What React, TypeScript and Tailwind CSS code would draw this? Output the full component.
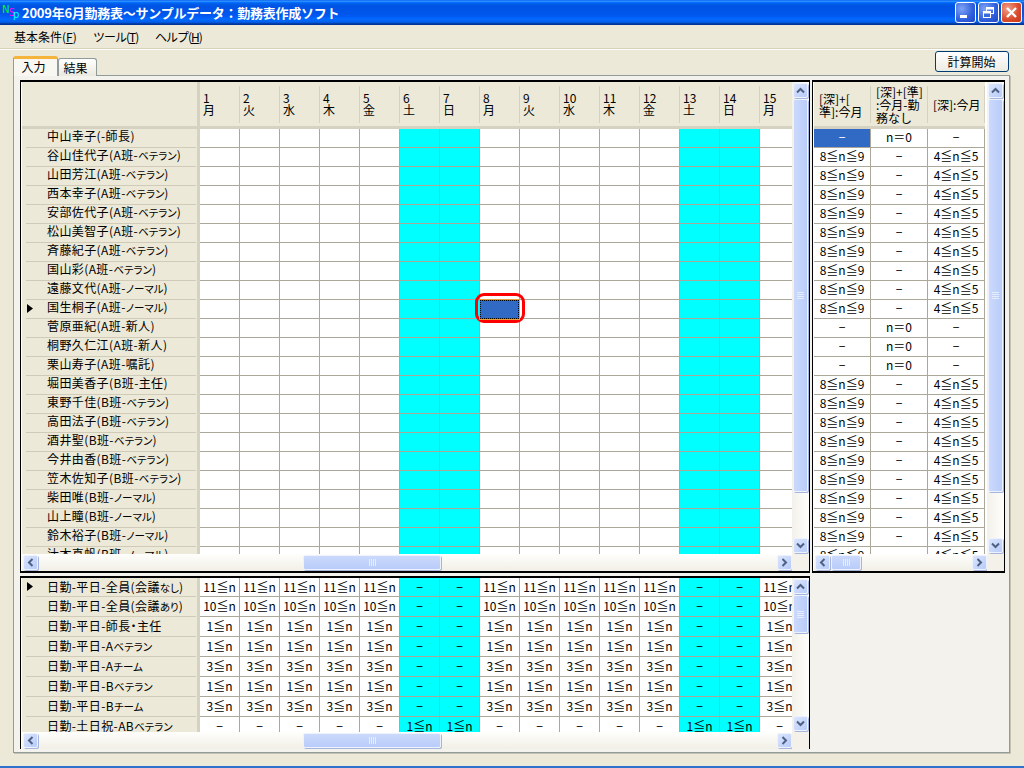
const FONT = "font-['Noto_Sans_CJK_JP','DejaVu_Sans',sans-serif]";

const staff = [
    '中山幸子(-師長)',
    '谷山佳代子(A班-ベテラン)',
    '山田芳江(A班-ベテラン)',
    '西本幸子(A班-ベテラン)',
    '安部佐代子(A班-ベテラン)',
    '松山美智子(A班-ベテラン)',
    '斉藤紀子(A班-ベテラン)',
    '国山彩(A班-ベテラン)',
    '遠藤文代(A班-ノーマル)',
    '国生桐子(A班-ノーマル)',
    '菅原亜紀(A班-新人)',
    '桐野久仁江(A班-新人)',
    '栗山寿子(A班-嘱託)',
    '堀田美香子(B班-主任)',
    '東野千佳(B班-ベテラン)',
    '高田法子(B班-ベテラン)',
    '酒井聖(B班-ベテラン)',
    '今井由香(B班-ベテラン)',
    '笠木佐知子(B班-ベテラン)',
    '柴田唯(B班-ノーマル)',
    '山上瞳(B班-ノーマル)',
    '鈴木裕子(B班-ノーマル)',
    '辻本真帆(B班-ノーマル)',
];

const days = ['月', '火', '水', '木', '金', '土', '日', '月', '火', '水', '木', '金', '土', '日', '月'];
const isWeekend = (i: number) => days[i] === '土' || days[i] === '日';

const rules: { name: string; weekday: string; weekend: string }[] = [
    { name: '日勤-平日-全員(会議なし)', weekday: '11≦n', weekend: '−' },
    { name: '日勤-平日-全員(会議あり)', weekday: '10≦n', weekend: '−' },
    { name: '日勤-平日-師長・主任', weekday: '1≦n', weekend: '−' },
    { name: '日勤-平日-Aベテラン', weekday: '1≦n', weekend: '−' },
    { name: '日勤-平日-Aチーム', weekday: '3≦n', weekend: '−' },
    { name: '日勤-平日-Bベテラン', weekday: '1≦n', weekend: '−' },
    { name: '日勤-平日-Bチーム', weekday: '3≦n', weekend: '−' },
    { name: '日勤-土日祝-ABベテラン', weekday: '−', weekend: '1≦n' },
];

const summaryRow = (i: number) =>
    i === 0 || (i >= 10 && i <= 12) ? ['−', 'n＝0', '−'] : ['8≦n≦9', '−', '4≦n≦5'];

function Chevron({ dir }: { dir: 'up' | 'down' | 'left' | 'right' }) {
    const points = {
        up: '1,6.5 4.5,3 8,6.5',
        down: '1,2.5 4.5,6 8,2.5',
        left: '6.5,1 3,4.5 6.5,8',
        right: '2.5,1 6,4.5 2.5,8',
    }[dir];
    return (
        <svg width="9" height="9" viewBox="0 0 9 9">
            <polyline points={points} fill="none" stroke="#4d6185" strokeWidth="2" />
        </svg>
    );
}

function ScrollButton({ dir }: { dir: 'up' | 'down' | 'left' | 'right' }) {
    return (
        <div className="flex h-[15px] w-[15px] shrink-0 items-center justify-center rounded-[2px] border border-[#eef2fd] bg-[linear-gradient(135deg,#dbe5fd,#b8cbf8)] shadow-[1px_1px_0_#a5b5dc]">
            <Chevron dir={dir} />
        </div>
    );
}

function VScroll({ thumbHeight }: { thumbHeight: number }) {
    return (
        <div className="flex w-[17px] shrink-0 flex-col items-center bg-[linear-gradient(90deg,#f3f1ea,#fefefc)] pt-[1px]">
            <ScrollButton dir="up" />
            <div
                className="mt-[1px] flex w-[15px] shrink-0 flex-col items-center justify-center gap-[1px] rounded-[2px] border border-[#eef2fd] bg-[linear-gradient(90deg,#cbd9fc,#b9ccf9)] shadow-[1px_1px_0_#a5b5dc]"
                style={{ height: thumbHeight }}
            >
                {[0, 1, 2, 3].map((n) => (
                    <div key={n} className="h-[1px] w-[7px] bg-[#e6edfe]" />
                ))}
            </div>
            <div className="flex-1" />
            <ScrollButton dir="down" />
            <div className="h-[1px] shrink-0" />
        </div>
    );
}

function HScroll({ thumbLeft, thumbWidth, rightGap }: { thumbLeft: number; thumbWidth: number; rightGap: number }) {
    return (
        <div className="flex h-[17px] shrink-0 items-center bg-[linear-gradient(180deg,#fefefc,#f1efe6)] pl-[1px]">
            <ScrollButton dir="left" />
            <div className="shrink-0" style={{ width: thumbLeft }} />
            <div
                className="flex h-[15px] shrink-0 items-center justify-center gap-[1px] rounded-[2px] border border-[#eef2fd] bg-[linear-gradient(180deg,#cbd9fc,#b9ccf9)] shadow-[1px_1px_0_#a5b5dc]"
                style={{ width: thumbWidth }}
            >
                {[0, 1, 2, 3].map((n) => (
                    <div key={n} className="h-[7px] w-[1px] bg-[#e6edfe]" />
                ))}
            </div>
            <div className="flex-1" />
            <ScrollButton dir="right" />
            <div className="shrink-0 self-stretch bg-[#f3f1ea]" style={{ width: rightGap }} />
        </div>
    );
}

// the reference font sets kana narrower than kanji
function Label({ text }: { text: string }) {
    return (
        <span className="whitespace-nowrap tracking-[0.4px] [font-feature-settings:'palt']">
            {text.split(/([ぁ-んァ-ヶー]+)/).map((part, i) =>
                i % 2 === 1 ? (
                    <span key={i} className="text-[10.5px] tracking-[0px]">
                        {part}
                    </span>
                ) : (
                    part
                ),
            )}
        </span>
    );
}

function RowHeader({ label, current, tall }: { label: string; current?: boolean; tall?: boolean }) {
    return (
        <div
            className={`relative flex h-full w-[178px] shrink-0 items-center bg-[#ece9d8] pl-[25px] shadow-[inset_-3px_0_0_#d6d2c2] ${
                tall ? 'pb-[2px]' : 'pb-[6px]'
            }`}
        >
            {current && (
                <svg className="absolute left-[5px] top-[4px]" width="6" height="9" viewBox="0 0 6 9">
                    <polygon points="0,0 6,4.5 0,9" fill="#000" />
                </svg>
            )}
            <Label text={label} />
            <div className="absolute bottom-0 left-[4px] right-[4px] h-[1px] bg-[#cfcbb8]" />
        </div>
    );
}

function Cell({ text, cyan }: { text?: string; cyan?: boolean }) {
    return (
        <div
            className={`flex h-full w-[40px] shrink-0 items-center justify-center whitespace-nowrap border-b border-r border-[#aca899] pb-[1px] ${
                cyan ? 'bg-[#00ffff]' : 'bg-white'
            }`}
        >
            {text}
        </div>
    );
}

function ShiftGrid() {
    return (
        <div className="flex h-[493px] flex-col border-x border-y-2 border-x-black border-y-black bg-white pl-[1px]">
            <div className="flex min-h-0 flex-1">
                <div className="min-w-0 flex-1 overflow-hidden">
                    <div className="flex h-[47px] w-max bg-[#ece9d8] shadow-[inset_0_-3px_0_#d6d2c2]">
                        <div className="w-[178px] shrink-0 shadow-[inset_-3px_0_0_#d6d2c2]" />
                        {days.map((day, i) => (
                            <div key={i} className="flex w-[40px] shrink-0 pb-[6px] pt-[4px]">
                                <div className="flex flex-1 flex-col justify-center pb-[2px] pl-[3px] leading-[12px] shadow-[inset_-1px_0_0_#d6d2c2]">
                                    <span>{i + 1}</span>
                                    <span>{day}</span>
                                </div>
                            </div>
                        ))}
                    </div>
                    {staff.map((name, r) => (
                        <div key={r} className="flex h-[19px] w-max">
                            <RowHeader label={name} current={r === 9} />
                            {days.map((_, c) => (
                                <Cell key={c} cyan={isWeekend(c)} />
                            ))}
                        </div>
                    ))}
                </div>
                <VScroll thumbHeight={393} />
            </div>
            <HScroll thumbLeft={265} thumbWidth={138} rightGap={17} />
        </div>
    );
}

function SummaryGrid() {
    return (
        <div className="flex h-[493px] flex-col border-x border-y-2 border-x-black border-y-black bg-white pl-[1px]">
            <div className="flex min-h-0 flex-1">
                <div className="min-w-0 flex-1 overflow-hidden">
                    <div className="flex h-[47px] w-max bg-[#ece9d8] text-[12px] leading-[13px] shadow-[inset_0_-3px_0_#d6d2c2]">
                        {['[深]+[\n準]:今月', '[深]+[準]\n:今月-勤\n務なし', '[深]:今月'].map((head) => (
                            <div key={head} className="flex w-[57px] shrink-0 pb-[6px] pt-[4px]">
                                <div className="flex-1 self-stretch whitespace-pre-line pl-[5px] shadow-[inset_-1px_0_0_#d6d2c2]">
                                    <div className="flex h-full items-center">{head}</div>
                                </div>
                            </div>
                        ))}
                    </div>
                    {staff.map((_, r) => (
                        <div key={r} className="flex h-[19px] w-max">
                            {summaryRow(r).map((text, c) => (
                                <div
                                    key={c}
                                    className={`flex h-full w-[57px] shrink-0 items-center justify-center whitespace-nowrap border-b border-r border-[#aca899] pb-[3px] ${
                                        r === 0 && c === 0 ? 'bg-[#316ac5] text-white' : 'bg-white'
                                    }`}
                                >
                                    {text}
                                </div>
                            ))}
                        </div>
                    ))}
                </div>
                <VScroll thumbHeight={393} />
            </div>
            <HScroll thumbLeft={1} thumbWidth={30} rightGap={17} />
        </div>
    );
}

function RuleGrid() {
    return (
        <div className="flex h-[173px] flex-col border-l border-r border-t-2 border-x-black border-t-black bg-white pl-[1px]">
            <div className="flex min-h-0 flex-1">
                <div className="min-w-0 flex-1 overflow-hidden">
                    {rules.map((rule, r) => (
                        <div key={r} className={`flex w-max ${r === 0 ? 'h-[19px]' : 'h-[20px]'}`}>
                            <RowHeader label={rule.name} current={r === 0} tall />
                            {days.map((_, c) => (
                                <Cell
                                    key={c}
                                    cyan={isWeekend(c)}
                                    text={isWeekend(c) ? rule.weekend : rule.weekday}
                                />
                            ))}
                        </div>
                    ))}
                </div>
                <VScroll thumbHeight={38} />
            </div>
            <HScroll thumbLeft={265} thumbWidth={138} rightGap={17} />
        </div>
    );
}

function WindowButton({ kind }: { kind: 'min' | 'restore' | 'close' }) {
    const bg =
        kind === 'close'
            ? 'bg-[radial-gradient(circle_at_30%_30%,#f0a08a,#d9492a_60%,#c23a1c)]'
            : 'bg-[radial-gradient(circle_at_30%_30%,#7fa3f5,#2f5fdc_60%,#2148c8)]';
    return (
        <div className={`flex h-[21px] w-[21px] items-center justify-center rounded-[3px] border border-white ${bg}`}>
            <svg width="15" height="15" viewBox="0 0 15 15">
                {kind === 'min' && <rect x="2" y="10" width="7" height="3" fill="#fff" />}
                {kind === 'restore' && (
                    <g fill="none" stroke="#fff">
                        <rect x="5.5" y="2.5" width="7" height="6" />
                        <path d="M5.5 3.5h7" strokeWidth="2" />
                        <rect x="2.5" y="6.5" width="7" height="6" fill="#3a68dd" />
                        <path d="M2.5 7.5h7" strokeWidth="2" />
                    </g>
                )}
                {kind === 'close' && (
                    <path d="M3 3l9 9M12 3l-9 9" stroke="#fff" strokeWidth="2.4" fill="none" />
                )}
            </svg>
        </div>
    );
}

function AppIcon() {
    return (
        <svg width="18" height="20" viewBox="0 0 18 20" className="shrink-0" fontFamily="'DejaVu Sans', sans-serif" fontSize="10">
            <text x="0" y="10" fill="#00ff00">N</text>
            <text x="6.5" y="13" fill="#ff00ff">S</text>
            <text x="11" y="15" fill="#00ffff">p</text>
        </svg>
    );
}

export default function App() {
    return (
        <div className={`${FONT} flex h-[768px] w-[1024px] flex-col overflow-hidden bg-[#ece9d8] text-[12px] text-black`}>
            <div className="flex h-[25px] shrink-0 items-center bg-[linear-gradient(180deg,#0058ee_0%,#3593ff_4%,#288eff_6%,#127dff_8%,#036ffc_10%,#0262ee_14%,#0057e5_20%,#0054e3_24%,#0055eb_56%,#005bf5_66%,#026afe_76%,#0062ef_86%,#0052d6_92%,#0040ab_94%,#003092_100%)] pl-[2px] pr-[2px]">
                <AppIcon />
                <span className="ml-[2px] whitespace-nowrap text-[13px] font-bold tracking-[-0.25px] text-white">
                    2009年6月勤務表～サンプルデータ：勤務表作成ソフト
                </span>
                <div className="ml-auto flex gap-[2px]">
                    <WindowButton kind="min" />
                    <WindowButton kind="restore" />
                    <WindowButton kind="close" />
                </div>
            </div>

            <div className="flex h-[24px] shrink-0 items-center border-b border-b-[#d8d2bd] pl-[14px] shadow-[0_1px_0_#fff]">
                <span className="w-[79px]">基本条件(<span className="underline">F</span>)</span>
                <span className="w-[62px] tracking-[-1px]">ツール(<span className="underline">T</span>)</span>
                <span className="tracking-[-1px]">ヘルプ(<span className="underline">H</span>)</span>
            </div>

            <div className="flex h-[26px] shrink-0 items-end justify-between pl-[13px] pr-[15px]">
                <div className="relative top-[1px] flex items-end">
                    <div className="z-10 flex h-[20px] w-[45px] items-center justify-center rounded-t-[3px] border-x border-[#919b9c] border-t-[3px] border-t-[#f5b43c] bg-[#f8f7f2] pb-[2px] pr-[4px]">
                        入力
                    </div>
                    <div className="flex h-[18px] w-[39px] items-center justify-center rounded-t-[3px] border-x border-t border-[#919b9c] bg-[linear-gradient(180deg,#ffffff,#ebe9dd)] pr-[4px]">
                        結果
                    </div>
                </div>
                <div className="mb-[3px] flex h-[21px] w-[74px] items-center justify-center rounded-[3px] border border-[#003c74] bg-[linear-gradient(180deg,#ffffff,#ecebe3)] pr-[1px]">
                    計算開始
                </div>
            </div>

            <div className="ml-[13px] mr-[14px] flex h-[678px] shrink-0 flex-col gap-[3px] border border-[#919b9c] bg-[#f4f2ec] pl-[6px] pt-[4px] shadow-[1px_1px_0_#c5c2b2]">
                <div className="flex gap-[2px]">
                    <div className="relative w-[790px] shrink-0">
                        <ShiftGrid />
                        <div className="absolute left-[455px] top-[213px] h-[30px] w-[50px] rounded-[9px] border-[3px] border-[#ff0000]" />
                        <div className="absolute left-[460px] top-[220px] h-[19px] w-[39px] border border-dotted border-black bg-[#316ac5] outline outline-1 outline-[#e8a040]" />
                    </div>
                    <div className="w-[193px] shrink-0">
                        <SummaryGrid />
                    </div>
                </div>
                <div className="w-[790px]">
                    <RuleGrid />
                </div>
            </div>

            <div className="mt-auto h-[2px] shrink-0 bg-[#2f71cd]" />
        </div>
    );
}
